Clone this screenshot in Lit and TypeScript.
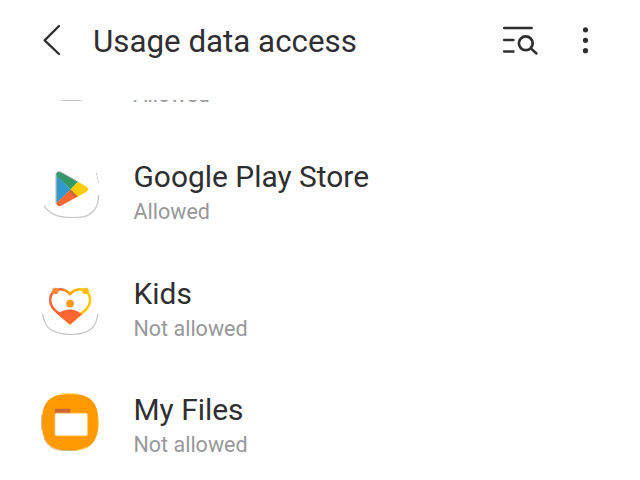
import { LitElement, html, svg, css } from "lit";
import { customElement, property } from "lit/decorators.js";

const icons: Record<string, unknown> = {
  blank: svg`<path d="M3.3 46C6.5 53 13 56.8 29 57.4S53 54 56.4 40" fill="none" stroke="#bdbdbd" stroke-width="1.8"/>`,
  play: svg`
    <path d="M3.3 45.8C6 51 10.5 54 16.7 55.9C23 57.8 37 58 43 56.6C53 54 57.4 47 57.6 35" fill="none" stroke="#c4c4c4" stroke-width="1.2"/>
    <path d="M55.3 13L57.3 22" fill="none" stroke="#bbb" stroke-width=".9" stroke-dasharray="2.4 1.5"/>
    <path d="M15.4 14.5L29.6 29.4L15.4 43.4Z" fill="#3399cc"/>
    <path d="M15.2 14C15.4 11.7 18 11.2 20 12.3L37 21.8L29.7 29.4L15.2 15Z" fill="#339966"/>
    <path d="M15.4 43.2L29.6 29.4L36.8 36.4L20.5 45.5C18 46.8 15.4 45.8 15.4 43.2Z" fill="#ff6633"/>
    <path d="M37 21.7L45.2 26.6C47.6 28 47.6 30.6 45.2 32L36.8 36.5L29.6 29.4Z" fill="#ffcc00"/>
    <path d="M29.6 29.4L36.8 36.5L34.6 37.6L27.8 31.2Z" fill="#cc6633"/>
    <path d="M15 43.2V14.5C15.2 12 17.5 11.2 19.8 12.2L34 20.2" fill="none" stroke="#999" stroke-width=".8"/>`,
  kids: svg`
    <path d="M1.6 37C3 45 5 50 10 52.8C17 57 23 57.5 30 57.5C40 57.5 45 56 50 52C54 49 56 44 56.8 37" fill="none" stroke="#c4c4c4" stroke-width="1.2"/>
    <defs><linearGradient id="heart" x1="8" x2="51" y1="0" y2="0" gradientUnits="userSpaceOnUse">
      <stop offset="0" stop-color="#ff6633"/><stop offset=".3" stop-color="#ff6633"/>
      <stop offset=".42" stop-color="#ff9900"/><stop offset=".7" stop-color="#ffbb00"/><stop offset="1" stop-color="#ffcc00"/>
    </linearGradient></defs>
    <path d="M29 17.2C25 11.8 17.5 10.8 13 14.5C8 18.9 8 26.6 12.6 32L29 46.2L45.6 32C50.2 26.6 50.4 18.9 45.2 14.5C40.5 10.8 33 11.8 29 17.2Z" fill="none" stroke="url(#heart)" stroke-width="2.5" stroke-linejoin="round"/>
    <path d="M14.5 35.5L19.5 35C24 31.6 33.5 31.4 38.5 35.4L41 37.2L29 47.6Z" fill="#ff6633"/>
    <circle cx="14.4" cy="13.9" r="3.2" fill="#ff8833"/><circle cx="44.6" cy="13.9" r="3.2" fill="#ffbb00"/>
    <circle cx="29.1" cy="26.6" r="3.9" fill="#ff9922"/>
    <path d="M8.4 27V20C9 15 11.5 12 15 10.8M19 11L25 12.8" fill="none" stroke="#999" stroke-width=".6" opacity=".7"/>`,
  files: svg`
    <path d="M29 .8C49 .8 57.4 9 57.4 29.2S49 57.8 29 57.8S.8 49.5 .8 29.2S9 .8 29 .8Z" fill="#ff9900"/>
    <path d="M3 45C5 51 9 55 17 57L31 57.8" fill="none" stroke="#c9b797" stroke-width=".9"/>
    <path d="M.8 22V37" stroke="#b9a58a" stroke-width=".9"/>
    <path d="M20 .9L38 1M57.2 25V36M36 57.4L47 54" fill="none" stroke="#ffd34d" stroke-width="1"/>
    <path d="M14 17C14 16.3 14.5 15.8 15.2 15.8H28C28.8 15.8 29.3 16.5 29.3 17.5V21H14Z" fill="#cc6633"/>
    <rect x="14" y="20.2" width="32.4" height="22.6" rx="1.5" fill="#fefefe" stroke="#ffd28a" stroke-width=".8"/>`,
};

@customElement("app-entry")
class AppEntry extends LitElement {
  @property() icon = "";
  @property() name = "";
  @property() access = "";

  static styles = css`
    :host { display: flex; align-items: center; height: 116.7px; flex: none; padding-left: 41px; }
    .icon { width: 58px; height: 58px; flex: none; display: block; }
    .text { margin-left: 34.5px; padding-top: 7.8px; white-space: nowrap; }
    .name { font-size: 29.9px; line-height: 38px; min-height: 38px; color: #2f2f31; }
    .access { font-size: 21.5px; line-height: 32px; color: #98989b; }
  `;

  render() {
    return html`
      <svg class="icon" viewBox="0 0 58 58">${icons[this.icon]}</svg>
      <div class="text">
        <div class="name">${this.name}</div>
        <div class="access">${this.access}</div>
      </div>`;
  }
}

@customElement("app-root")
class AppRoot extends LitElement {
  static styles = css`
    :host { display: flex; flex-direction: column; height: 480px; overflow: hidden; background: #fefefe; font-family: Roboto, sans-serif; }
    .bar { display: flex; align-items: center; height: 82px; margin-bottom: 18px; flex: none; color: #2f2f31; }
    .bar svg { flex: none; fill: none; stroke: currentColor; stroke-linecap: round; stroke-linejoin: round; }
    .back { margin-left: 40px; }
    .title { margin: 0 0 0 13px; padding-top: 2px; font-size: 31.3px; font-weight: 400; line-height: 40px; white-space: nowrap; flex: 1; }
    .search { margin-right: 40px; }
    .more { margin-right: 48px; }
    .list { flex: 1; min-height: 0; overflow: hidden; }
    .scroll { display: flex; flex-direction: column; margin-top: -86px; }
  `;

  render() {
    return html`
      <header class="bar">
        <svg class="back" width="40" height="40" viewBox="40 21 40 40" stroke-width="2.3"><path d="M59 26L44.6 40.4L59 54"/></svg>
        <h1 class="title">Usage data access</h1>
        <svg class="search" width="38" height="40" viewBox="502.5 21 38 40" stroke-width="2.4">
          <path d="M504.6 28H532.2M504.6 40H514M504.6 51.5H514M531.5 48.5L537 53.5"/>
          <circle cx="526.3" cy="43.3" r="6.9" stroke-width="2.7"/>
        </svg>
        <svg class="more" width="12" height="40" viewBox="580 21 12 40" stroke-width="5.2"><path d="M585.5 29.8V29.81M585.5 40.3V40.31M585.5 50.7V50.71"/></svg>
      </header>
      <main class="list">
        <div class="scroll">
          <app-entry icon="blank" access="Allowed"></app-entry>
          <app-entry icon="play" name="Google Play Store" access="Allowed"></app-entry>
          <app-entry icon="kids" name="Kids" access="Not allowed"></app-entry>
          <app-entry icon="files" name="My Files" access="Not allowed"></app-entry>
        </div>
      </main>`;
  }
}
